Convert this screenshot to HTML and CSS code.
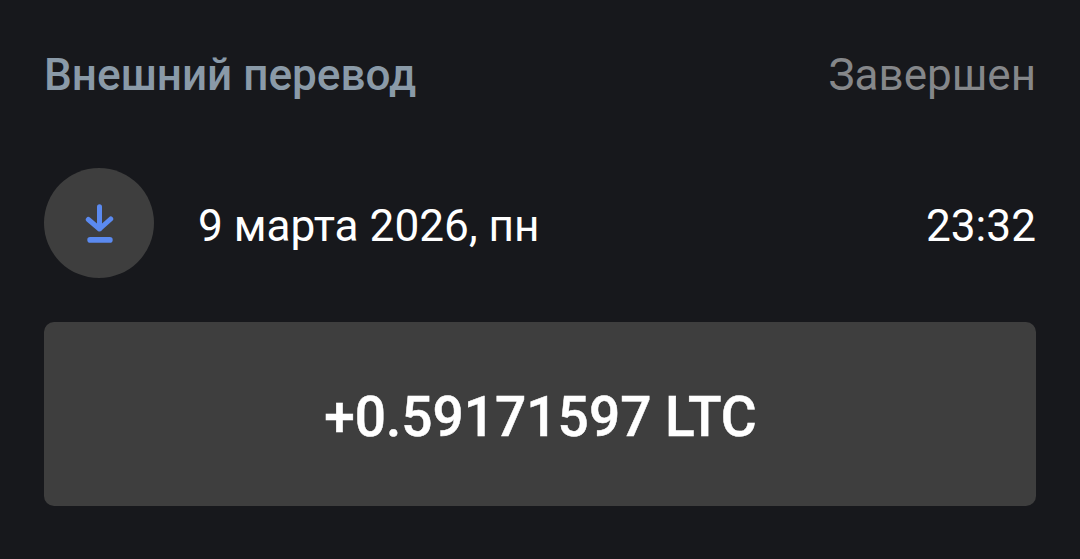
FILE: index.html
```html
<!DOCTYPE html>
<html lang="ru">
<head>
	<meta charset="UTF-8">
	<title>Внешний перевод</title>
	<link rel="stylesheet" href="styles.css">
</head>
<body>
	<div class="head">
		<span class="title">Внешний перевод</span>
		<span class="status">Завершен</span>
	</div>
	<div class="row">
		<div class="circle">
			<svg width="30" height="40" viewBox="0 0 30 40">
				<path d="M15.5 3.8V26M4.3 16.5l11.2 9.5 11.2-10" fill="none" stroke="#5b8af0" stroke-width="5" stroke-linecap="round" stroke-linejoin="round"/>
				<rect x="3.3" y="34" width="25.4" height="5.7" rx="2.8" fill="#5b8af0"/>
			</svg>
		</div>
		<span class="date">9 марта 2026, пн</span>
		<span class="time">23:32</span>
	</div>
	<div class="amount">+0.59171597 LTC</div>
</body>
</html>
```

FILE: styles.css
```css
*{margin: 0;padding: 0;}
body{
	background: #17181c;
	font-family: Roboto, "Noto Sans", sans-serif;
	padding: 49px 44px 0 44px;
}
.head{
	display: flex;
	justify-content: space-between;
	align-items: center;
	height: 52px;
}
.title{font-size: 44.1px;font-weight: 500;color: #8a9aa8;}
.status{font-size: 44px;color: #85878a;}
.row{
	display: flex;
	align-items: center;
	margin-top: 67px;
	height: 110px;
}
.circle{
	width: 110px;
	height: 110px;
	border-radius: 50%;
	background: #3e3e3e;
	display: flex;
	align-items: center;
	justify-content: center;
}
.date{font-size: 44.2px;color: #fff;margin-left: 44px;flex: 1;padding-top: 5px;}
.time{font-size: 44.2px;color: #fff;padding-top: 5px;}
.amount{
	margin-top: 44px;
	height: 184px;
	padding: 6px 0 0 1px;
	box-sizing: border-box;
	border-radius: 10px;
	background: #3e3e3e;
	color: #fff;
	font-size: 55px;
	font-weight: 500;
	-webkit-text-stroke: 0.5px #fff;
	display: flex;
	align-items: center;
	justify-content: center;
}
```
